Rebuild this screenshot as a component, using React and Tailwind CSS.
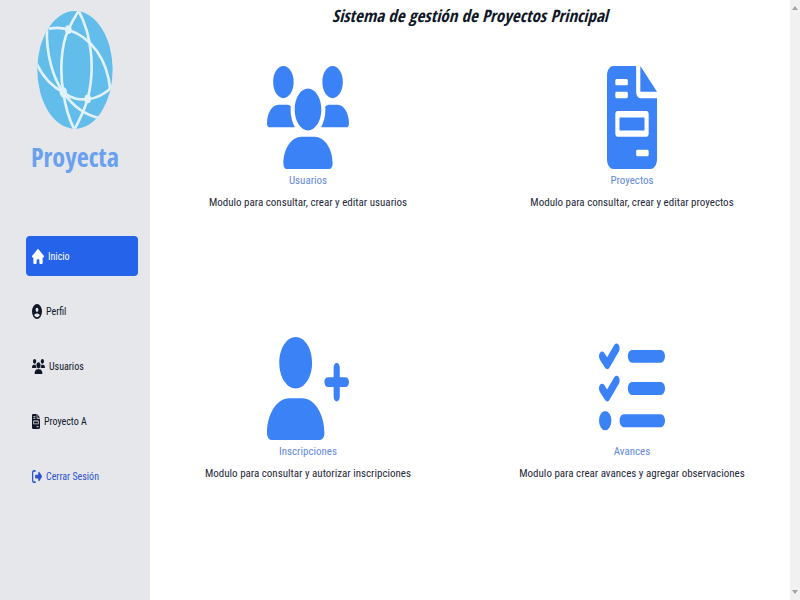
import { FaHouse, FaListCheck, FaCircleUser, FaRightFromBracket } from "react-icons/fa6";

function UsersIcon({ className }) {
  return (
    <svg viewBox="0 0 640 512" preserveAspectRatio="none" fill="currentColor" className={className} aria-hidden="true">
      <path d="M320 320c57.4 0 104-46.6 104-104s-46.6-104-104-104s-104 46.6-104 104S262.6 320 320 320zM369.9 352H270.1C191.6 352 128 411.7 128 485.3C128 500.1 140.7 512 156.4 512h327.2C499.3 512 512 500.1 512 485.3C512 411.7 448.4 352 369.9 352zM512 160c44.2 0 80-35.8 80-80S556.2 0 512 0s-80 35.8-80 80S467.8 160 512 160zM183.9 216c0-5.4 1-10.6 1.6-15.9C174.6 194.1 162.6 192 149.9 192H88.1C39.4 192 0 233.8 0 285.3C0 295.6 7.9 304 17.6 304h199.5C196.7 280.2 183.9 249.7 183.9 216zM128 160c44.2 0 80-35.8 80-80S172.2 0 128 0S48 35.8 48 80S83.8 160 128 160zM551.9 192h-61.8c-12.8 0-24.9 3-35.9 8.2C454.8 205.5 455.8 210.6 455.8 216c0 33.7-12.8 64.2-33.2 88h199.7C632.1 304 640 295.6 640 285.3C640 233.8 600.6 192 551.9 192z" />
    </svg>
  );
}

function FileIcon({ className }) {
  return (
    <svg viewBox="0 0 384 512" preserveAspectRatio="none" fill="currentColor" fillRule="evenodd" className={className} aria-hidden="true">
      <path d="M256 0v128h128L256 0zM288 256H96v64h192V256zM224 128V0H48C21.5 0 0 21.5 0 48v416C0 490.5 21.5 512 48 512h288c26.5 0 48-21.5 48-48V160H256C238.3 160 224 145.7 224 128zM72 64h80c4.4 0 8 3.6 8 8v16c0 4.4-3.6 8-8 8H72c-4.4 0-8-3.6-8-8V72C64 67.6 67.6 64 72 64zM72 128h80c4.4 0 8 3.6 8 8v16c0 4.4-3.6 8-8 8H72c-4.4 0-8-3.6-8-8v-16C64 131.6 67.6 128 72 128zM312 448h-80c-4.4 0-8-3.6-8-8v-16c0-4.4 3.6-8 8-8h80c4.4 0 8 3.6 8 8v16C320 444.4 316.4 448 312 448zM320 240v96c0 8.9-7.1 16-16 16H80c-8.9 0-16-7.1-16-16v-96c0-8.9 7.1-16 16-16h224C312.9 224 320 231.1 320 240z" />
    </svg>
  );
}

function UserPlusIcon({ className }) {
  return (
    <svg viewBox="0 0 640 512" preserveAspectRatio="none" fill="currentColor" className={className} aria-hidden="true">
      <path d="M224 256c70.7 0 128-57.3 128-128S294.7 0 224 0S96 57.3 96 128S153.3 256 224 256zM274.7 304H173.3C77.6 304 0 381.7 0 477.4C0 496.5 15.5 512 34.7 512h378.7C432.5 512 448 496.5 448 477.4C448 381.7 370.4 304 274.7 304zM616 200h-48v-48C568 138.8 557.3 128 544 128s-24 10.8-24 24v48h-48C458.8 200 448 210.8 448 224s10.8 24 24 24h48v48C520 309.3 530.7 320 544 320s24-10.7 24-24v-48h48C629.3 248 640 237.3 640 224S629.3 200 616 200z" />
    </svg>
  );
}

const navItems = [
  { label: "Inicio", Icon: FaHouse, size: "w-3", style: "bg-[#2563eb] text-white" },
  { label: "Perfil", Icon: FaCircleUser, size: "w-2.5", style: "text-gray-900" },
  { label: "Usuarios", Icon: UsersIcon, size: "w-[13px]", style: "text-gray-900" },
  { label: "Proyecto A", Icon: FileIcon, size: "w-2", style: "text-gray-900" },
  { label: "Cerrar Sesión", Icon: FaRightFromBracket, size: "w-2.5", style: "text-[#2f52d0]" },
];

const modules = [
  { label: "Usuarios", text: "Modulo para consultar, crear y editar usuarios", Icon: UsersIcon, size: "w-[82px]" },
  { label: "Proyectos", text: "Modulo para consultar, crear y editar proyectos", Icon: FileIcon, size: "w-[50px]" },
  { label: "Inscripciones", text: "Modulo para consultar y autorizar inscripciones", Icon: UserPlusIcon, size: "w-[82px]" },
  { label: "Avances", text: "Modulo para crear avances y agregar observaciones", Icon: FaListCheck, size: "w-[66px]" },
];

function Logo() {
  return (
    <svg viewBox="111 32 228 353" preserveAspectRatio="none" className="h-[118px] w-[76px]" aria-hidden="true">
      <defs>
        <clipPath id="globe">
          <ellipse cx="225" cy="208" rx="113" ry="176" />
        </clipPath>
      </defs>
      <ellipse cx="225" cy="208" rx="113" ry="176" fill="#62bdeb" />
      <g clipPath="url(#globe)" fill="none" stroke="#e2f1fa" strokeWidth="8">
        <path d="M146 85C168 81 188 82 205 88C275 112 322 175 331 268" />
        <path d="M141 80C137 165 162 238 190 275C215 312 250 342 300 353" />
        <path d="M237 30C224 50 213 70 205 88C181 140 180 220 190 275C197 325 208 358 224 388" />
        <path d="M235 30C277 105 285 210 263 294C252 335 236 362 222 388" />
        <path d="M110 190C130 232 160 260 190 275C218 297 240 298 263 296C292 293 318 278 340 256" />
      </g>
      <g fill="#e2f1fa">
        <ellipse cx="205" cy="88" rx="10" ry="13" />
        <ellipse cx="190" cy="275" rx="11" ry="16" />
        <ellipse cx="263" cy="295" rx="10" ry="13" />
      </g>
    </svg>
  );
}

export default function App() {
  return (
    <div className="flex min-h-screen bg-white font-['Roboto_Condensed','Roboto',sans-serif] text-[11px] leading-4 text-gray-800">
      <aside className="w-[18.75%] shrink-0 bg-gray-200">
        <div className="flex flex-col items-center pt-[11px]">
          <Logo />
          <p className="mt-2 font-['Open_Sans_Condensed','Open_Sans',sans-serif] text-[26px] leading-10 font-bold text-[#6aa0ee]">Proyecta</p>
        </div>
        <nav className="mt-[59px] flex flex-col gap-[15px] pr-3 pl-[26px] text-[10px]">
          {navItems.map(({ label, Icon, size, style }) => (
            <a key={label} href="#" className={`flex h-10 items-center gap-1 rounded px-1.5 ${style}`}>
              <Icon preserveAspectRatio="none" className={`h-[15px] shrink-0 ${size}`} />
              <span className="pt-0.5">{label}</span>
            </a>
          ))}
        </nav>
      </aside>
      <main className="min-w-0 flex-1">
        <h1 className="pt-1 text-center font-['Open_Sans_Condensed','Open_Sans',sans-serif] text-[17px] leading-6 font-bold text-gray-900 italic">
          Sistema de gestión de Proyectos Principal
        </h1>
        <div className="mt-[38px] grid grid-cols-2 gap-x-6 gap-y-[126px] px-2">
          {modules.map(({ label, text, Icon, size }) => (
            <section key={label} className="flex flex-col items-center text-center">
              <a href="#" className="flex flex-col items-center gap-1 text-[#6488e0]">
                <Icon preserveAspectRatio="none" className={`h-[103px] text-[#3b82f6] ${size}`} />
                <span>{label}</span>
              </a>
              <p className="mt-1.5">{text}</p>
            </section>
          ))}
        </div>
      </main>
      <div className="flex w-2.5 shrink-0 flex-col items-center justify-between bg-[#f1f1f1] py-1.5" aria-hidden="true">
        <svg viewBox="0 0 6 4" className="h-1 w-1.5 fill-[#a3a3a3]"><path d="M3 0L6 4H0Z" /></svg>
        <svg viewBox="0 0 6 4" className="h-1 w-1.5 fill-[#a3a3a3]"><path d="M0 0H6L3 4Z" /></svg>
      </div>
    </div>
  );
}
